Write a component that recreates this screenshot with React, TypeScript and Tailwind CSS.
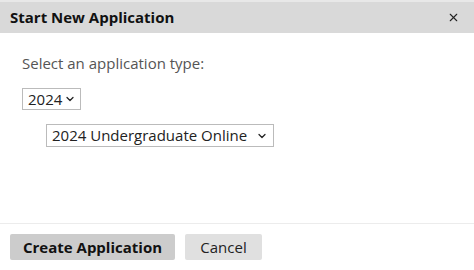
import { ChevronDown, X } from 'lucide-react'

export default function App() {
  return (
    <div className="flex h-[270px] w-[474px] flex-col bg-white font-['Open_Sans',sans-serif] text-[#222]">
      <div className="border-t-2 border-[#e8e8e8] bg-[#d9d9d9]">
        <div className="flex h-[31px] items-center justify-between pl-[10px] pr-[14px]">
          <p className="text-[15px] font-bold text-[#111]">Start New Application</p>
          <X className="h-[13px] w-[13px] text-[#222]" strokeWidth={2} />
        </div>
      </div>

      <div className="flex-1 px-[22px] pt-[19px]">
        <p className="text-[15px] leading-[22px] text-[#555]">Select an application type:</p>
        <div className="mt-[14px] flex h-[22px] w-[59px] items-center justify-between border border-[#bbb] pl-[5px] pr-[4px]">
          <span className="text-[15px] text-[#222]">2024</span>
          <ChevronDown className="h-[12px] w-[12px]" strokeWidth={2.5} />
        </div>
        <div className="ml-[24px] mt-[14px] flex h-[23px] w-[228px] items-center justify-between border border-[#bbb] pl-[5px] pr-[5px]">
          <span className="text-[15px] text-[#222]">2024 Undergraduate Online</span>
          <ChevronDown className="h-[12px] w-[12px]" strokeWidth={2.5} />
        </div>
      </div>

      <div className="flex h-[47px] items-start gap-[10px] border-t border-[#ececec] pl-[10px] pt-[10px]">
        <button className="h-[26px] w-[165px] rounded-[2px] bg-[#cccccc] text-[15px] font-bold text-[#111]">
          Create Application
        </button>
        <button className="h-[26px] w-[77px] rounded-[2px] bg-[#e0e0e0] text-[15px] text-[#222]">
          Cancel
        </button>
      </div>
    </div>
  )
}
